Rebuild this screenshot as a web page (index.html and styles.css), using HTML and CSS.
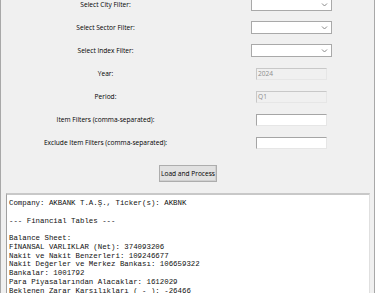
FILE: index.html
```html
<!DOCTYPE html>
<html>
<head>
<meta charset="utf-8">
<link rel="stylesheet" href="styles.css">
</head>
<body>
<div class="window">
  <div class="form">
    <div class="label">Select City Filter:</div>
    <div class="cell"><div class="combo"><svg class="chev" width="7" height="5" viewBox="0 0 7 5"><path d="M1 1.5 L3.5 4 L6 1.5" fill="none" stroke="#8a8a8a" stroke-width="1"/></svg></div></div>
    <div class="label">Select Sector Filter:</div>
    <div class="cell"><div class="combo"><svg class="chev" width="7" height="5" viewBox="0 0 7 5"><path d="M1 1.5 L3.5 4 L6 1.5" fill="none" stroke="#8a8a8a" stroke-width="1"/></svg></div></div>
    <div class="label">Select Index Filter:</div>
    <div class="cell"><div class="combo"><svg class="chev" width="7" height="5" viewBox="0 0 7 5"><path d="M1 1.5 L3.5 4 L6 1.5" fill="none" stroke="#8a8a8a" stroke-width="1"/></svg></div></div>
    <div class="label">Year:</div>
    <div class="cell"><div class="entry disabled">2024</div></div>
    <div class="label">Period:</div>
    <div class="cell"><div class="entry disabled">Q1</div></div>
    <div class="label">Item Filters (comma-separated):</div>
    <div class="cell"><div class="entry"></div></div>
    <div class="label">Exclude Item Filters (comma-separated):</div>
    <div class="cell"><div class="entry"></div></div>
  </div>
  <div class="actions"><div class="button">Load and Process</div></div>
  <div class="output">Company: AKBANK T.A.Ş., Ticker(s): AKBNK

--- Financial Tables ---

Balance Sheet:
FİNANSAL VARLIKLAR (Net): 374093206
Nakit ve Nakit Benzerleri: 109246677
Nakit Değerler ve Merkez Bankası: 106659322
Bankalar: 1001792
Para Piyasalarından Alacaklar: 1612029
Beklenen Zarar Karşılıkları ( - ): -26466</div>
</div>
</body>
</html>
```
FILE: styles.css
```css
html, body {
  margin: 0;
  padding: 0;
  background: #f0f0f0;
  overflow: hidden;
}
.window {
  width: 375px;
  height: 293px;
  box-sizing: border-box;
  border-left: 1px solid #a8a8a8;
  border-right: 1px solid #a8a8a8;
  overflow: hidden;
  font-family: "Open Sans", "Liberation Sans", sans-serif;
  font-size: 6.6px;
  color: #000;
}
.form {
  display: grid;
  grid-template-columns: 209px 163px;
  grid-auto-rows: 23px;
  margin-top: -7px;
}
.label, .cell {
  display: flex;
  align-items: center;
  justify-content: center;
}
.combo {
  width: 81px;
  height: 13px;
  box-sizing: border-box;
  background: #fff;
  border: 1px solid #a9a9a9;
  display: flex;
  align-items: center;
  justify-content: flex-end;
  padding-right: 3px;
}
.entry {
  width: 71px;
  height: 12px;
  box-sizing: border-box;
  background: #fff;
  border-top: 1px solid #a5a5a5;
  border-left: 1px solid #a5a5a5;
  border-right: 1px solid #e6e6e6;
  border-bottom: 1px solid #e6e6e6;
  padding-left: 1px;
  line-height: 10px;
  color: #8d8d8d;
}
.entry.disabled {
  background: #f0f0f0;
  border-top-color: #c8c8c8;
  border-left-color: #c8c8c8;
}
.actions {
  display: flex;
  justify-content: center;
  padding-left: 1px;
  margin-top: 11px;
}
.button {
  width: 58px;
  height: 17px;
  box-sizing: border-box;
  background: #e1e1e1;
  border: 1px solid #adadad;
  box-shadow: inset -1px -1px 0 #d0d0d0;
  display: flex;
  align-items: center;
  justify-content: center;
  color: #000;
}
.output {
  margin: 11px 0 0 5px;
  width: 364px;
  height: 120px;
  box-sizing: border-box;
  background: #fff;
  border-top: 2px solid #c8c8c8;
  border-left: 1px solid #a0a0a0;
  border-right: 1px solid #e0e0e0;
  padding: 4px 2px;
  white-space: pre;
  font-family: "Liberation Mono", "DejaVu Sans Mono", monospace;
  font-size: 7.4px;
  line-height: 8.75px;
  color: #111;
}
```
